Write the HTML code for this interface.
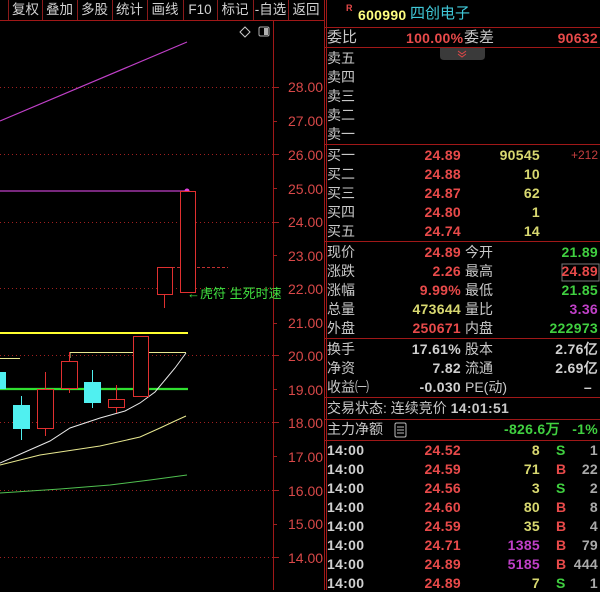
<!DOCTYPE html>
<html><head><meta charset="utf-8"><style>
*{margin:0;padding:0;box-sizing:border-box}
body{width:600px;height:590px;background:#000;overflow:hidden;position:relative;font-family:"Liberation Sans","Noto Sans CJK SC",sans-serif;font-size:14px;color:#c8c8c8}
.a{position:absolute;height:18px;line-height:18px;white-space:nowrap}
.l{left:327px}
.v1{right:139px;text-align:right}
.l2{left:465px}
.v2{right:2px;text-align:right}
.q{right:60px;text-align:right}
.bs{left:556px}
.R{color:#e84a4a}.G{color:#40d040}.Y{color:#d8d870}.M{color:#c040c8}.W{color:#d0d0d0}
.n{font-family:"Liberation Sans",sans-serif;font-weight:bold;letter-spacing:0.3px}
.hl{position:absolute;left:325px;width:275px;height:1px;background:#a01818}
.tb{position:absolute;top:0;height:20px;line-height:20px;color:#d0d0d0;font-size:13.5px;text-align:center}
.ts{position:absolute;top:0;width:1px;height:20px;background:#8a1a1a}
</style></head><body>
<svg width="600" height="590" style="position:absolute;left:0;top:0">
<!-- toolbar bottom line -->
<line x1="0" y1="20.5" x2="325" y2="20.5" stroke="#a01818"/>
<!-- dividers -->
<line x1="273.5" y1="20" x2="273.5" y2="590" stroke="#a01818"/>
<line x1="324.5" y1="0" x2="324.5" y2="590" stroke="#a01818"/>
<!-- grid dotted -->
<g stroke="#a02020" stroke-dasharray="1,3">
<line x1="0" y1="87.5" x2="273" y2="87.5"/>
<line x1="0" y1="154.5" x2="273" y2="154.5"/>
<line x1="0" y1="222.5" x2="273" y2="222.5"/>
<line x1="0" y1="288.5" x2="273" y2="288.5"/>
<line x1="0" y1="355.5" x2="273" y2="355.5"/>
<line x1="0" y1="422.5" x2="273" y2="422.5"/>
<line x1="0" y1="490.5" x2="273" y2="490.5"/>
<line x1="0" y1="557.5" x2="273" y2="557.5"/>
</g>
<!-- axis ticks -->
<g stroke="#a02020">
<line x1="273" y1="87.5" x2="279" y2="87.5"/><line x1="273" y1="121.5" x2="277" y2="121.5"/>
<line x1="273" y1="154.5" x2="279" y2="154.5"/><line x1="273" y1="188.5" x2="277" y2="188.5"/>
<line x1="273" y1="222.5" x2="279" y2="222.5"/><line x1="273" y1="255.5" x2="277" y2="255.5"/>
<line x1="273" y1="288.5" x2="279" y2="288.5"/><line x1="273" y1="323.5" x2="277" y2="323.5"/>
<line x1="273" y1="355.5" x2="279" y2="355.5"/><line x1="273" y1="389.5" x2="277" y2="389.5"/>
<line x1="273" y1="422.5" x2="279" y2="422.5"/><line x1="273" y1="456.5" x2="277" y2="456.5"/>
<line x1="273" y1="490.5" x2="279" y2="490.5"/><line x1="273" y1="524.5" x2="277" y2="524.5"/>
<line x1="273" y1="557.5" x2="279" y2="557.5"/>
</g>
<g font-family="Liberation Sans,sans-serif" font-size="14" fill="#d84848">
<text x="288" y="92">28.00</text><text x="288" y="126">27.00</text><text x="288" y="160">26.00</text>
<text x="288" y="194">25.00</text><text x="288" y="227">24.00</text><text x="288" y="261">23.00</text>
<text x="288" y="294">22.00</text><text x="288" y="328">21.00</text><text x="288" y="361">20.00</text>
<text x="288" y="395">19.00</text><text x="288" y="428">18.00</text><text x="288" y="462">17.00</text>
<text x="288" y="496">16.00</text><text x="288" y="529">15.00</text><text x="288" y="563">14.00</text>
</g>
<!-- diamond & icon -->
<path d="M245 27 L250 32 L245 37 L240 32 Z" fill="none" stroke="#c8c8c8"/>
<rect x="259" y="27" width="10" height="9" rx="1.5" fill="none" stroke="#b0b0b0"/>
<rect x="264" y="28" width="4" height="7" fill="#b0b0b0"/>
<!-- pink lines -->
<line x1="0" y1="121" x2="187" y2="42" stroke="#c040c8" stroke-width="1.2"/>
<line x1="0" y1="191" x2="186" y2="191" stroke="#c040c8" stroke-width="1.2"/>
<circle cx="187" cy="191" r="2.5" fill="#e040e0"/>
<!-- horizontal level lines -->
<line x1="0" y1="333" x2="188" y2="333" stroke="#ffff30" stroke-width="2"/>
<line x1="0" y1="389" x2="188" y2="389" stroke="#30e030" stroke-width="2.2"/>
<line x1="0" y1="358.5" x2="20" y2="358.5" stroke="#e8e890"/>
<polyline points="70,358 70,352.5 186,352.5" fill="none" stroke="#e8e890"/>
<line x1="157" y1="267.5" x2="228" y2="267.5" stroke="#c03030" stroke-dasharray="3,2"/>
<!-- MAs -->
<polyline points="0,463 25,452 50,441 70,428 100,418 125,411 140,403 155,392 165,380 175,368 186,353" fill="none" stroke="#e8e8e8"/>
<polyline points="0,465 40,455 100,446 140,437 160,428 175,421 186,416" fill="none" stroke="#e8e890"/>
<polyline points="0,493 60,489 110,485 150,480 187,475" fill="none" stroke="#50c050"/>
<!-- candles -->
<g fill="#50f0f0">
<rect x="0" y="372" width="6" height="17"/>
<line x1="21.5" y1="396" x2="21.5" y2="440" stroke="#50f0f0"/>
<rect x="13" y="405" width="17" height="24"/>
<line x1="92.5" y1="370" x2="92.5" y2="408" stroke="#50f0f0"/>
<rect x="84" y="382" width="17" height="21"/>
</g>
<g fill="#000" stroke="#e03030">
<line x1="45.5" y1="372" x2="45.5" y2="436"/>
<rect x="37.5" y="389.5" width="16" height="39"/>
<line x1="69.5" y1="352" x2="69.5" y2="393"/>
<rect x="61.5" y="361.5" width="16" height="27"/>
<line x1="116.5" y1="385" x2="116.5" y2="413"/>
<rect x="108.5" y="399.5" width="16" height="8"/>
<rect x="133.5" y="336.5" width="15" height="60"/>
<line x1="164.5" y1="294" x2="164.5" y2="308"/>
<rect x="157.5" y="267.5" width="15" height="27"/>
<rect x="180.5" y="191.5" width="15" height="101"/>
</g>
<text x="187" y="298" font-size="13" fill="#40e040" font-family="Liberation Sans,Noto Sans CJK SC,sans-serif">←虎符 生死时速</text>
<!-- right panel lines -->
<g fill="#a01818">
<rect x="325" y="27" width="275" height="1"/><rect x="325" y="47" width="275" height="1"/>
<rect x="325" y="144" width="275" height="1"/><rect x="325" y="241" width="275" height="1"/>
<rect x="325" y="338" width="275" height="1"/><rect x="325" y="397" width="275" height="1"/>
<rect x="325" y="419" width="275" height="1"/><rect x="325" y="440" width="275" height="1"/>
</g>
<rect x="326" y="0" width="1" height="590" fill="#a01818"/>
<path d="M440 48 H485 V56 Q485 60 481 60 H444 Q440 60 440 56 Z" fill="#3a3a3a"/>
<path d="M458 51 L462 54 L466 51 M458 54 L462 57 L466 54" fill="none" stroke="#e04848" stroke-width="1"/>
<rect x="562" y="264" width="37" height="17" fill="none" stroke="#c8c8c8" stroke-opacity="0.6"/>
<rect x="395" y="423" width="11" height="14" rx="1.5" fill="none" stroke="#bbb"/>
<path d="M397 427H404M397 430H404M397 433H404" stroke="#bbb"/>
</svg>

<div class="ts" style="left:8px"></div>
<div class="tb" style="left:8px;width:35px">复权</div><div class="ts" style="left:42px"></div>
<div class="tb" style="left:42px;width:35px">叠加</div><div class="ts" style="left:77px"></div>
<div class="tb" style="left:77px;width:35px">多股</div><div class="ts" style="left:112px"></div>
<div class="tb" style="left:112px;width:35px">统计</div><div class="ts" style="left:147px"></div>
<div class="tb" style="left:147px;width:36px">画线</div><div class="ts" style="left:183px"></div>
<div class="tb" style="left:183px;width:34px">F10</div><div class="ts" style="left:217px"></div>
<div class="tb" style="left:217px;width:36px">标记</div><div class="ts" style="left:253px"></div>
<div class="tb" style="left:253px;width:35px">-自选</div><div class="ts" style="left:288px"></div>
<div class="tb" style="left:288px;width:36px">返回</div>

<div class="a" style="left:346px;top:2px;font-size:9px;color:#e84a4a;font-weight:bold;line-height:12px">R</div>
<div class="a n" style="left:358px;top:6px;color:#ffff80">600990</div>
<div class="a" style="left:410px;top:5px;color:#40c8d8;font-size:15px">四创电子</div>

<div class="a l" style="top:29px;font-size:15px">委比</div>
<div class="a n R" style="left:406px;top:29px">100.00%</div>
<div class="a" style="left:464px;top:29px;font-size:15px">委差</div>
<div class="a n R v2" style="top:29px">90632</div>

<div class="a l" style="top:49px">卖五</div>
<div class="a l" style="top:68px">卖四</div>
<div class="a l" style="top:87px">卖三</div>
<div class="a l" style="top:106px">卖二</div>
<div class="a l" style="top:125px">卖一</div>

<div class="a l" style="top:146px">买一</div><div class="a n R v1" style="top:146px">24.89</div><div class="a n Y q" style="top:146px">90545</div><div class="a R v2" style="top:146px;font-size:12px;opacity:.85">+212</div>
<div class="a l" style="top:165px">买二</div><div class="a n R v1" style="top:165px">24.88</div><div class="a n Y q" style="top:165px">10</div>
<div class="a l" style="top:184px">买三</div><div class="a n R v1" style="top:184px">24.87</div><div class="a n Y q" style="top:184px">62</div>
<div class="a l" style="top:203px">买四</div><div class="a n R v1" style="top:203px">24.80</div><div class="a n Y q" style="top:203px">1</div>
<div class="a l" style="top:222px">买五</div><div class="a n R v1" style="top:222px">24.74</div><div class="a n Y q" style="top:222px">14</div>

<div class="a l" style="top:243px">现价</div><div class="a n R v1" style="top:243px">24.89</div><div class="a l2" style="top:243px">今开</div><div class="a n G v2" style="top:243px">21.89</div>
<div class="a l" style="top:262px">涨跌</div><div class="a n R v1" style="top:262px">2.26</div><div class="a l2" style="top:262px">最高</div><div class="a n R v2" style="top:262px">24.89</div>
<div class="a l" style="top:281px">涨幅</div><div class="a n R v1" style="top:281px">9.99%</div><div class="a l2" style="top:281px">最低</div><div class="a n G v2" style="top:281px">21.85</div>
<div class="a l" style="top:300px">总量</div><div class="a n Y v1" style="top:300px">473644</div><div class="a l2" style="top:300px">量比</div><div class="a n M v2" style="top:300px">3.36</div>
<div class="a l" style="top:319px">外盘</div><div class="a n R v1" style="top:319px">250671</div><div class="a l2" style="top:319px">内盘</div><div class="a n G v2" style="top:319px">222973</div>

<div class="a l" style="top:340px">换手</div><div class="a n W v1" style="top:340px">17.61%</div><div class="a l2" style="top:340px">股本</div><div class="a n W v2" style="top:340px">2.76亿</div>
<div class="a l" style="top:359px">净资</div><div class="a n W v1" style="top:359px">7.82</div><div class="a l2" style="top:359px">流通</div><div class="a n W v2" style="top:359px">2.69亿</div>
<div class="a l" style="top:378px">收益㈠</div><div class="a n W v1" style="top:378px">-0.030</div><div class="a l2" style="top:378px">PE(动)</div><div class="a n W v2" style="top:378px;right:8px">–</div>

<div class="a l" style="top:399px">交易状态: 连续竞价 <span class="n">14:01:51</span></div>
<div class="a l" style="top:420px">主力净额</div><div class="a n G" style="top:420px;left:504px">-826.6万</div><div class="a n G v2" style="top:420px">-1%</div>

<div class="a n W l" style="top:441px">14:00</div><div class="a n R v1" style="top:441px">24.52</div><div class="a n Y q" style="top:441px">8</div><div class="a n G bs" style="top:441px">S</div><div class="a n W v2" style="top:441px;color:#aaa">1</div>
<div class="a n W l" style="top:460px">14:00</div><div class="a n R v1" style="top:460px">24.59</div><div class="a n Y q" style="top:460px">71</div><div class="a n R bs" style="top:460px">B</div><div class="a n v2" style="top:460px;color:#aaa">22</div>
<div class="a n W l" style="top:479px">14:00</div><div class="a n R v1" style="top:479px">24.56</div><div class="a n Y q" style="top:479px">3</div><div class="a n G bs" style="top:479px">S</div><div class="a n v2" style="top:479px;color:#aaa">2</div>
<div class="a n W l" style="top:498px">14:00</div><div class="a n R v1" style="top:498px">24.60</div><div class="a n Y q" style="top:498px">80</div><div class="a n R bs" style="top:498px">B</div><div class="a n v2" style="top:498px;color:#aaa">8</div>
<div class="a n W l" style="top:517px">14:00</div><div class="a n R v1" style="top:517px">24.59</div><div class="a n Y q" style="top:517px">35</div><div class="a n R bs" style="top:517px">B</div><div class="a n v2" style="top:517px;color:#aaa">4</div>
<div class="a n W l" style="top:536px">14:00</div><div class="a n R v1" style="top:536px">24.71</div><div class="a n M q" style="top:536px">1385</div><div class="a n R bs" style="top:536px">B</div><div class="a n v2" style="top:536px;color:#aaa">79</div>
<div class="a n W l" style="top:555px">14:00</div><div class="a n R v1" style="top:555px">24.89</div><div class="a n M q" style="top:555px">5185</div><div class="a n R bs" style="top:555px">B</div><div class="a n v2" style="top:555px;color:#aaa">444</div>
<div class="a n W l" style="top:574px">14:00</div><div class="a n R v1" style="top:574px">24.89</div><div class="a n Y q" style="top:574px">7</div><div class="a n G bs" style="top:574px">S</div><div class="a n v2" style="top:574px;color:#aaa">1</div>
</body></html>
